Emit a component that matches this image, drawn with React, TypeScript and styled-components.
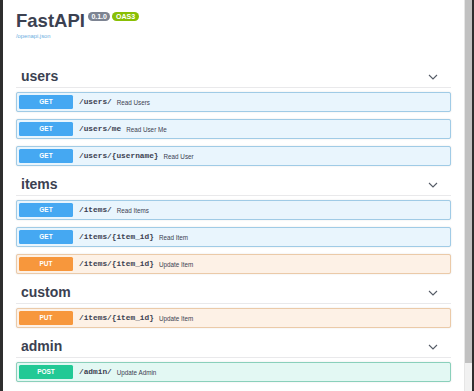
import styled, { createGlobalStyle } from "styled-components";

type Method = "get" | "put" | "post";

const palette: Record<Method, { badge: string; bg: string; border: string }> = {
    get: { badge: "#45a8f2", bg: "#e9f5fd", border: "#a0cbe6" },
    put: { badge: "#f7973c", bg: "#fdf1e6", border: "#ebcaa8" },
    post: { badge: "#22c995", bg: "#e3f8f3", border: "#8ad0bb" },
};

const sections: { name: string; ops: { method: Method; path: string; summary: string }[] }[] = [
    {
        name: "users",
        ops: [
            { method: "get", path: "/users/", summary: "Read Users" },
            { method: "get", path: "/users/me", summary: "Read User Me" },
            { method: "get", path: "/users/{username}", summary: "Read User" },
        ],
    },
    {
        name: "items",
        ops: [
            { method: "get", path: "/items/", summary: "Read Items" },
            { method: "get", path: "/items/{item_id}", summary: "Read Item" },
            { method: "put", path: "/items/{item_id}", summary: "Update Item" },
        ],
    },
    {
        name: "custom",
        ops: [{ method: "put", path: "/items/{item_id}", summary: "Update Item" }],
    },
    {
        name: "admin",
        ops: [{ method: "post", path: "/admin/", summary: "Update Admin" }],
    },
];

const Chevron = () => (
    <svg width="10" height="6" viewBox="0 0 10 6" fill="none">
        <path d="M1 1l4 4 4-4" stroke="#555b66" strokeWidth="1.1" />
    </svg>
);

export default function App() {
    return (
        <>
            <GlobalStyle />
            <Frame>
                <EdgeLeft />
                <Main>
                    <Info>
                        <TitleRow>
                            <Title>FastAPI</Title>
                            <Pill $color="#7d8492">0.1.0</Pill>
                            <Pill $color="#89bf04">OAS3</Pill>
                        </TitleRow>
                        <SpecLink>/openapi.json</SpecLink>
                    </Info>
                    {sections.map((s) => (
                        <Section key={s.name}>
                            <TagHeading>
                                <span>{s.name}</span>
                                <Chevron />
                            </TagHeading>
                            <OpList>
                                {s.ops.map((op, i) => (
                                    <OpRow key={i} $method={op.method}>
                                        <MethodBadge $method={op.method}>{op.method.toUpperCase()}</MethodBadge>
                                        <Path>{op.path}</Path>
                                        <Summary>{op.summary}</Summary>
                                    </OpRow>
                                ))}
                            </OpList>
                        </Section>
                    ))}
                </Main>
                <Scrollbar>
                    <Thumb />
                </Scrollbar>
                <EdgeRight />
            </Frame>
        </>
    );
}

const GlobalStyle = createGlobalStyle`
    html, body {
        margin: 0;
        padding: 0;
        overflow: hidden;
        background: #ffffff;
    }
    body {
        font-family: "Liberation Sans", Arial, sans-serif;
    }
`;

const Frame = styled.div`
    display: flex;
    width: 474px;
    height: 391px;
    overflow: hidden;
`;

const EdgeLeft = styled.div`
    width: 3px;
    background: #2f2f2f;
`;

const EdgeRight = styled.div`
    width: 2px;
    background: #2e2e2e;
`;

const Scrollbar = styled.div`
    width: 7px;
    display: flex;
    flex-direction: column;
    background: #f1f1f1;
    border-left: 1px solid #e6e6e6;
`;

const Thumb = styled.div`
    height: 363px;
    background: #c1c1c1;
`;

const Main = styled.main`
    flex: 1;
    background: #ffffff;
    padding: 0 13px 0 13px;
    color: #3b4151;
`;

const Info = styled.div`
    height: 66px;
    padding-top: 10px;
    box-sizing: border-box;
`;

const TitleRow = styled.div`
    display: flex;
    align-items: flex-start;
    gap: 2px;
`;

const Title = styled.h1`
    margin: 0 1px 0 0;
    font-size: 18.5px;
    line-height: 21px;
    font-weight: 700;
    color: #3b4151;
`;

const Pill = styled.span<{ $color: string }>`
    margin-top: 2px;
    height: 9px;
    padding: 0 3.5px;
    border-radius: 4.5px;
    background: ${(p) => p.$color};
    color: #ffffff;
    font-size: 7px;
    line-height: 9px;
    font-weight: 700;
`;

const SpecLink = styled.div`
    margin-top: 2px;
    font-size: 5.8px;
    color: #6aaee0;
`;

const Section = styled.section`
    margin-bottom: 8px;
`;

const TagHeading = styled.h3`
    margin: 0 0 4px;
    height: 22px;
    box-sizing: border-box;
    padding: 0 13px 0 5px;
    display: flex;
    align-items: center;
    justify-content: space-between;
    border-bottom: 1px solid #e9e9eb;
    font-size: 14px;
    line-height: 21px;
    font-weight: 700;
    color: #3b4151;
`;

const OpList = styled.div`
    display: flex;
    flex-direction: column;
    gap: 7px;
`;

const OpRow = styled.div<{ $method: Method }>`
    height: 20px;
    box-sizing: border-box;
    display: flex;
    align-items: center;
    padding: 0 3px 0 2px;
    background: ${(p) => palette[p.$method].bg};
    border: 1px solid ${(p) => palette[p.$method].border};
    border-radius: 2px;
    box-shadow: 0 0 1.5px rgba(0, 0, 0, 0.15);
`;

const MethodBadge = styled.span<{ $method: Method }>`
    width: 54px;
    height: 14px;
    border-radius: 1.5px;
    background: ${(p) => palette[p.$method].badge};
    color: #ffffff;
    font-size: 6.5px;
    font-weight: 700;
    line-height: 14px;
    text-align: center;
`;

const Path = styled.span`
    margin-left: 6px;
    font-family: "Liberation Mono", "Courier New", monospace;
    font-size: 7.8px;
    font-weight: 700;
    color: #3b4151;
`;

const Summary = styled.span`
    margin-left: 5px;
    font-size: 6.3px;
    color: #3b4151;
`;
